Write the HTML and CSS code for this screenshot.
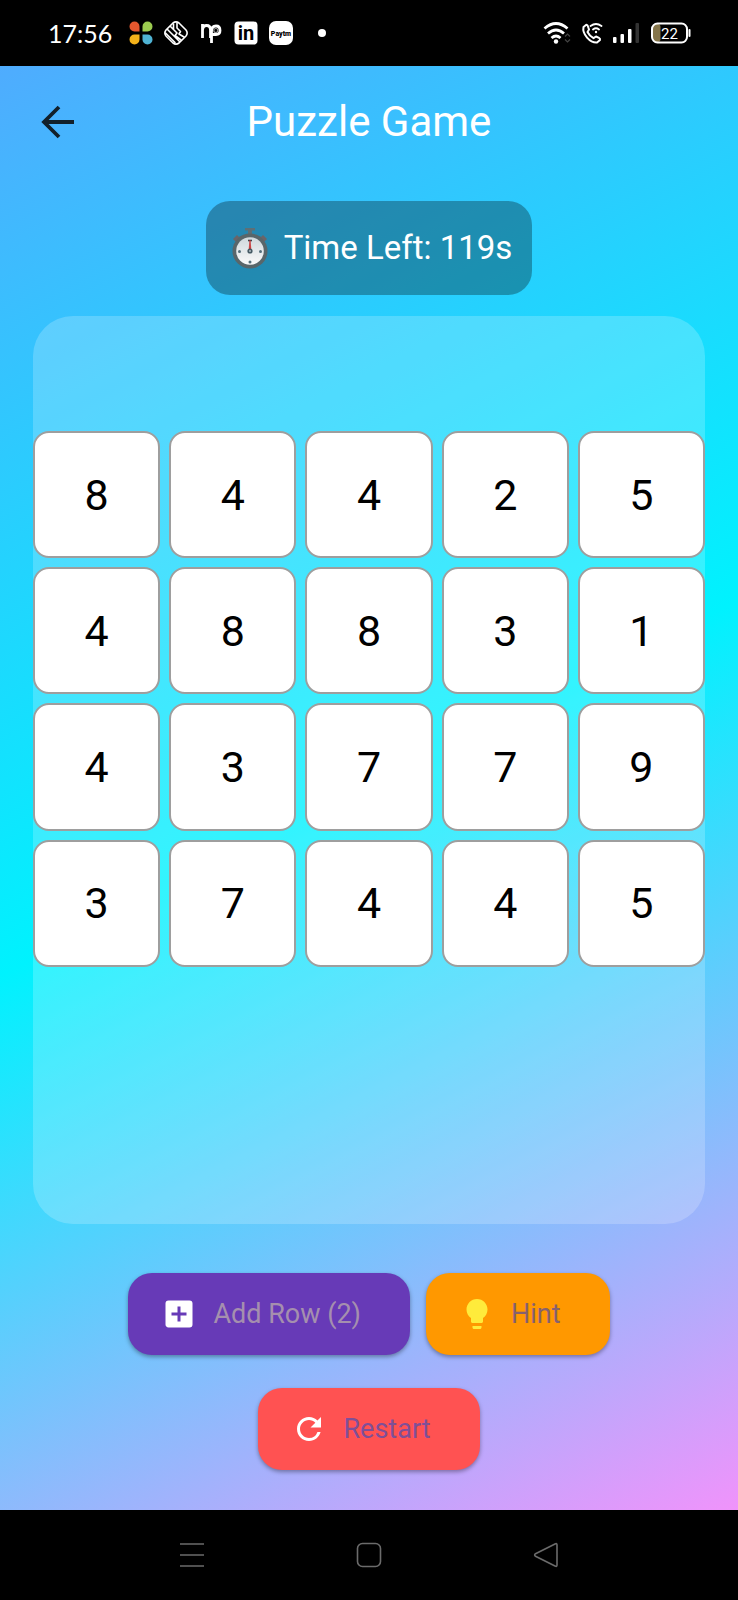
FILE: index.html
```html
<!DOCTYPE html>
<html lang="en">
<head>
<meta charset="utf-8">
<meta name="viewport" content="width=device-width, initial-scale=1">
<title>Puzzle Game</title>
<link rel="stylesheet" href="styles.css">
</head>
<body>
<div class="status-bar">
  <div class="status-left">
    <span class="clock">17:56</span>
    <svg class="app-icon" viewBox="0 0 24 24" aria-hidden="true">
      <path fill="#e4572e" d="M5.500 0.500a5 5 0 0 1 5 5v5h-5a5 5 0 0 1 0-10z"/>
      <path fill="#9ccc50" d="M18.500 0.500a5 5 0 0 1 0 10h-5v-5a5 5 0 0 1 5-5z"/>
      <path fill="#f5b21a" d="M5.500 13.500h5v5a5 5 0 1 1-5-5z"/>
      <path fill="#4fb3d4" d="M13.500 13.500h5a5 5 0 1 1-5 5z"/>
    </svg>
    <svg class="app-icon" viewBox="0 0 24 24" fill="none" stroke="#fff" stroke-width="1.600" stroke-linejoin="round" stroke-linecap="round" aria-hidden="true">
      <path d="M9 2Q12-.3 15 2L22 9Q24.300 12 22 15L15 22Q12 24.300 9 22L2 15Q-.3 12 2 9Z"/>
      <path d="M3.500 8.500L15.500 20.500M6.500 5.500L13 12L11 14.500L17 19M9.500 3L9.500 8.500M13 2L13 7L16.500 10.500L15 13L20 16M1.500 12L11 21.500"/>
    </svg>
    <svg class="app-icon" viewBox="0 0 24 24" fill="none" stroke="#fff" stroke-width="2.800" aria-hidden="true">
      <path d="M3.500 17V3M3.500 9Q4 4.500 7.500 4.500Q11.500 4.500 11.500 9V17M12.500 22V10.500Q12.500 5 17 5Q21 5 21 9.500Q21 13.500 17 13.500H13"/>
      <circle cx="16.800" cy="9.500" r="2" stroke-width="1.200" stroke="#999"/>
    </svg>
    <svg class="app-icon" viewBox="0 0 24 24" aria-hidden="true">
      <rect x="0.500" y="0.500" width="23" height="23" rx="4" fill="#fff"/>
      <text x="12" y="19" text-anchor="middle" class="icon-in">in</text>
    </svg>
    <svg class="app-icon" viewBox="0 0 24 24" aria-hidden="true">
      <rect width="24" height="24" rx="7" fill="#fff"/>
      <text x="12" y="14.500" text-anchor="middle" class="icon-paytm">Paytm</text>
    </svg>
    <span class="dot"></span>
  </div>
  <div class="status-right">
    <svg width="28" height="24" viewBox="0 0 28 24" fill="none" stroke="#fff" stroke-width="2.800" aria-hidden="true">
      <path d="M1.500 7.500Q13 -2.500 24.500 7.500M5 12.500Q13 5.500 21 12.500M8.500 17Q13 13 17.500 17"/>
      <circle cx="13" cy="20.500" r="2.200" fill="#fff" stroke="none"/>
      <path d="M22 15.500l2.500-2.500 2.500 2.500M22 18.500l2.500 2.500 2.500-2.500" stroke="#444" stroke-width="1.200"/>
    </svg>
    <svg width="22" height="22" viewBox="0 0 22 22" fill="none" stroke="#fff" stroke-width="2" stroke-linecap="round" stroke-linejoin="round" aria-hidden="true">
      <path d="M5 3L2.500 5C1 12 9 21 16 20.500L19 18Q19.500 16.500 18 15.800L15 14.500L12.500 16.200Q8.500 14 6.500 10L8 7.500L6.800 4Q6.200 2.500 5 3Z"/>
      <path d="M9.500 4Q15 0 20.500 4M12 7.500Q15 5 18 7.500" stroke-width="1.800"/>
      <circle cx="15" cy="10" r="1.200" fill="#fff" stroke="none"/>
    </svg>
    <svg width="26" height="22" viewBox="0 0 26 22" fill="#fff" aria-hidden="true">
      <rect x="0" y="15" width="3.500" height="6" rx="1"/>
      <rect x="7.500" y="12" width="3.500" height="9" rx="1"/>
      <rect x="15" y="7" width="3.500" height="14" rx="1"/>
      <rect x="22.500" y="1" width="3.500" height="20" rx="1" fill="#333"/>
    </svg>
    <svg class="battery" width="40" height="22" viewBox="0 0 40 22" aria-hidden="true">
      <rect x="2" y="2" width="7.500" height="18" rx="3" fill="#85754a"/>
      <rect x="1" y="1.500" width="35" height="19" rx="5.500" fill="none" stroke="#fff" stroke-width="2"/>
      <path d="M38.500 8v6" stroke="#fff" stroke-width="2" stroke-linecap="round"/>
      <text x="18.500" y="16.500" text-anchor="middle" class="battery-level">22</text>
    </svg>
  </div>
</div>

<main class="game">
  <header class="app-bar">
    <button class="back" type="button" aria-label="Back">
      <svg width="34" height="34" viewBox="0 0 34 34" fill="none" stroke="#12202b" stroke-width="3.800" aria-hidden="true">
        <path d="M33 17H3.500M18 2L3 17L18 32"/>
      </svg>
    </button>
    <h1 class="title">Puzzle Game</h1>
  </header>

  <div class="timer" role="timer">
    <svg width="36" height="42" viewBox="0 0 36 42" aria-hidden="true">
      <defs>
        <linearGradient id="face" x1="0" y1="0" x2="0" y2="1">
          <stop offset="0" stop-color="#cfd8dc"/><stop offset="1" stop-color="#fafafa"/>
        </linearGradient>
      </defs>
      <path d="M13 1h10v2.500h-3v4h-4v-4h-3z" fill="#5d6f76"/>
      <path d="M1 12l4-4 4 4-4 4zM35 12l-4-4-4 4 4 4z" fill="#6a6469"/>
      <circle cx="18" cy="24" r="17.500" fill="#59666a"/>
      <circle cx="18" cy="24" r="13.800" fill="url(#face)"/>
      <path d="M16 13.500h4" stroke="#37474f" stroke-width="1.600"/>
      <circle cx="7.500" cy="24.500" r="1.500" fill="#546e7a"/>
      <circle cx="28.500" cy="24.500" r="1.500" fill="#546e7a"/>
      <circle cx="18" cy="35" r="1.500" fill="#546e7a"/>
      <path d="M17 23l1-10 1 10z" fill="#c62828" stroke="#c62828" stroke-width=".6"/>
      <circle cx="18" cy="24" r="2.600" fill="#455a64"/>
      <circle cx="18" cy="24" r="1" fill="#b0bec5"/>
    </svg>
    <span>Time Left: 119s</span>
  </div>

  <section class="board" aria-label="Number board">
    <div class="grid">
      <button class="tile" type="button">8</button>
      <button class="tile" type="button">4</button>
      <button class="tile" type="button">4</button>
      <button class="tile" type="button">2</button>
      <button class="tile" type="button">5</button>
      <button class="tile" type="button">4</button>
      <button class="tile" type="button">8</button>
      <button class="tile" type="button">8</button>
      <button class="tile" type="button">3</button>
      <button class="tile" type="button">1</button>
      <button class="tile" type="button">4</button>
      <button class="tile" type="button">3</button>
      <button class="tile" type="button">7</button>
      <button class="tile" type="button">7</button>
      <button class="tile" type="button">9</button>
      <button class="tile" type="button">3</button>
      <button class="tile" type="button">7</button>
      <button class="tile" type="button">4</button>
      <button class="tile" type="button">4</button>
      <button class="tile" type="button">5</button>
    </div>
  </section>

  <div class="actions">
    <button class="action add-row" type="button">
      <svg width="36" height="36" viewBox="0 0 24 24" fill="#fff" aria-hidden="true">
        <path d="M19 3H5a2 2 0 0 0-2 2v14c0 1.100.89 2 2 2h14a2 2 0 0 0 2-2V5a2 2 0 0 0-2-2zm-2 10h-4v4h-2v-4H7v-2h4V7h2v4h4v2z"/>
      </svg>
      Add Row (2)
    </button>
    <button class="action hint" type="button">
      <svg width="36" height="36" viewBox="0 0 24 24" fill="#ffeb3b" aria-hidden="true">
        <path d="M9 21c0 .55.45 1 1 1h4c.55 0 1-.45 1-1v-1H9v1zm3-19C8.140 2 5 5.140 5 9c0 2.380 1.190 4.470 3 5.740V17c0 .55.45 1 1 1h6c.55 0 1-.45 1-1v-2.260c1.810-1.270 3-3.360 3-5.740 0-3.860-3.140-7-7-7z"/>
      </svg>
      Hint
    </button>
    <button class="action restart" type="button">
      <svg width="36" height="36" viewBox="0 0 24 24" fill="#fff" aria-hidden="true">
        <path d="M17.650 6.350A7.958 7.958 0 0 0 12 4c-4.420 0-7.990 3.580-7.990 8s3.570 8 7.990 8c3.730 0 6.840-2.550 7.730-6h-2.080A5.990 5.990 0 0 1 12 18c-3.310 0-6-2.690-6-6s2.690-6 6-6c1.660 0 3.140.69 4.220 1.780L13 11h7V4l-2.350 2.350z"/>
      </svg>
      Restart
    </button>
  </div>
</main>

<nav class="nav-bar" aria-label="System navigation">
  <button class="nav-button" type="button" aria-label="Recent apps">
    <svg width="26" height="26" viewBox="0 0 26 26" fill="none" stroke="#6b6b6b" stroke-width="1.600" aria-hidden="true"><path d="M1 2h24M1 13h24M1 24h24"/></svg>
  </button>
  <button class="nav-button" type="button" aria-label="Home">
    <svg width="26" height="26" viewBox="0 0 26 26" fill="none" stroke="#6b6b6b" stroke-width="1.600" aria-hidden="true"><rect x="1.500" y="1.500" width="23" height="23" rx="5"/></svg>
  </button>
  <button class="nav-button" type="button" aria-label="Back">
    <svg width="26" height="26" viewBox="0 0 26 26" fill="none" stroke="#6b6b6b" stroke-width="1.600" stroke-linejoin="round" aria-hidden="true"><path d="M22 2Q24 1 24 3V23Q24 25 22 24L2.500 14.300Q.8 13 2.500 11.700Z"/></svg>
  </button>
</nav>
</body>
</html>
```
FILE: styles.css
```css
* {
  box-sizing: border-box;
}

body {
  margin: 0;
  min-height: 100vh;
  display: flex;
  flex-direction: column;
  background: #000;
  font-family: Roboto, "Noto Sans", sans-serif;
}

button {
  margin: 0;
  padding: 0;
  border: 0;
  background: none;
  font-family: inherit;
  cursor: pointer;
}

svg {
  display: block;
  flex: none;
}

/* System status bar */
.status-bar {
  height: 66px;
  padding: 0 47px 0 48px;
  display: flex;
  align-items: center;
  justify-content: space-between;
  color: #fff;
}

.status-left,
.status-right {
  display: flex;
  align-items: center;
}

.status-left {
  gap: 11px;
}

.status-right {
  gap: 10px;
}

.clock {
  margin-right: 6px;
  font-family: Lato, sans-serif;
  font-size: 25px;
  line-height: 32px;
}

.app-icon {
  width: 24px;
  height: 24px;
}

.icon-in {
  font: 700 20px Roboto, sans-serif;
}

.icon-paytm {
  font: 900 7px Roboto, sans-serif;
}

.battery {
  margin-left: 2px;
}

.battery-level {
  font: 400 15px Roboto, sans-serif;
  fill: #fff;
}

.dot {
  width: 8px;
  height: 8px;
  margin-left: 14px;
  border-radius: 50%;
  background: #fff;
}

/* Game screen */
.game {
  flex: 1;
  padding: 0 33px 40px;
  display: flex;
  flex-direction: column;
  background: linear-gradient(153deg, #4facfe, #00f2fe, #f093fb);
}

.app-bar {
  height: 112px;
  display: grid;
  grid-template-columns: 50px 1fr 50px;
  align-items: center;
}

.back {
  width: 50px;
  height: 50px;
  display: grid;
  place-items: center;
}

.title {
  margin: 0;
  color: #fff;
  font-size: 42px;
  font-weight: 400;
  line-height: 56px;
  text-align: center;
}

.timer {
  align-self: center;
  height: 94px;
  margin: 23px 0 21px;
  padding: 0 20px 0 26px;
  display: flex;
  align-items: center;
  gap: 16px;
  border-radius: 24px;
  background: rgba(0, 0, 0, 0.3);
  color: #fff;
  font-size: 33px;
  line-height: 44px;
}

.board {
  flex: 1;
  padding: 115px 0;
  border-radius: 40px;
  background: rgba(255, 255, 255, 0.2);
}

.grid {
  display: grid;
  grid-template-columns: repeat(5, 1fr);
  gap: 9px;
}

.tile {
  aspect-ratio: 1;
  border: 2px solid #9e9e9e;
  border-radius: 16px;
  background: #fff;
  color: #000;
  font-size: 43px;
  line-height: 52px;
}

.actions {
  margin-top: 49px;
  display: flex;
  flex-wrap: wrap;
  justify-content: center;
  gap: 33px 16px;
  padding: 0 60px;
}

.action {
  height: 82px;
  padding: 0 49px 0 33px;
  display: flex;
  align-items: center;
  gap: 16px;
  border-radius: 24px;
  box-shadow: 0 2px 4px rgba(0, 0, 0, 0.35);
  font-size: 27px;
  font-weight: 400;
  line-height: 36px;
}

.add-row {
  background: #673ab7;
  color: #a58fae;
}

.hint {
  background: #ff9800;
  color: #86616f;
}

.restart {
  background: #ff5252;
  color: #7f4f98;
}

/* System navigation bar */
.nav-bar {
  height: 90px;
  padding: 0 104px;
  display: grid;
  grid-template-columns: repeat(3, 1fr);
}

.nav-button {
  display: grid;
  place-items: center;
}
```
